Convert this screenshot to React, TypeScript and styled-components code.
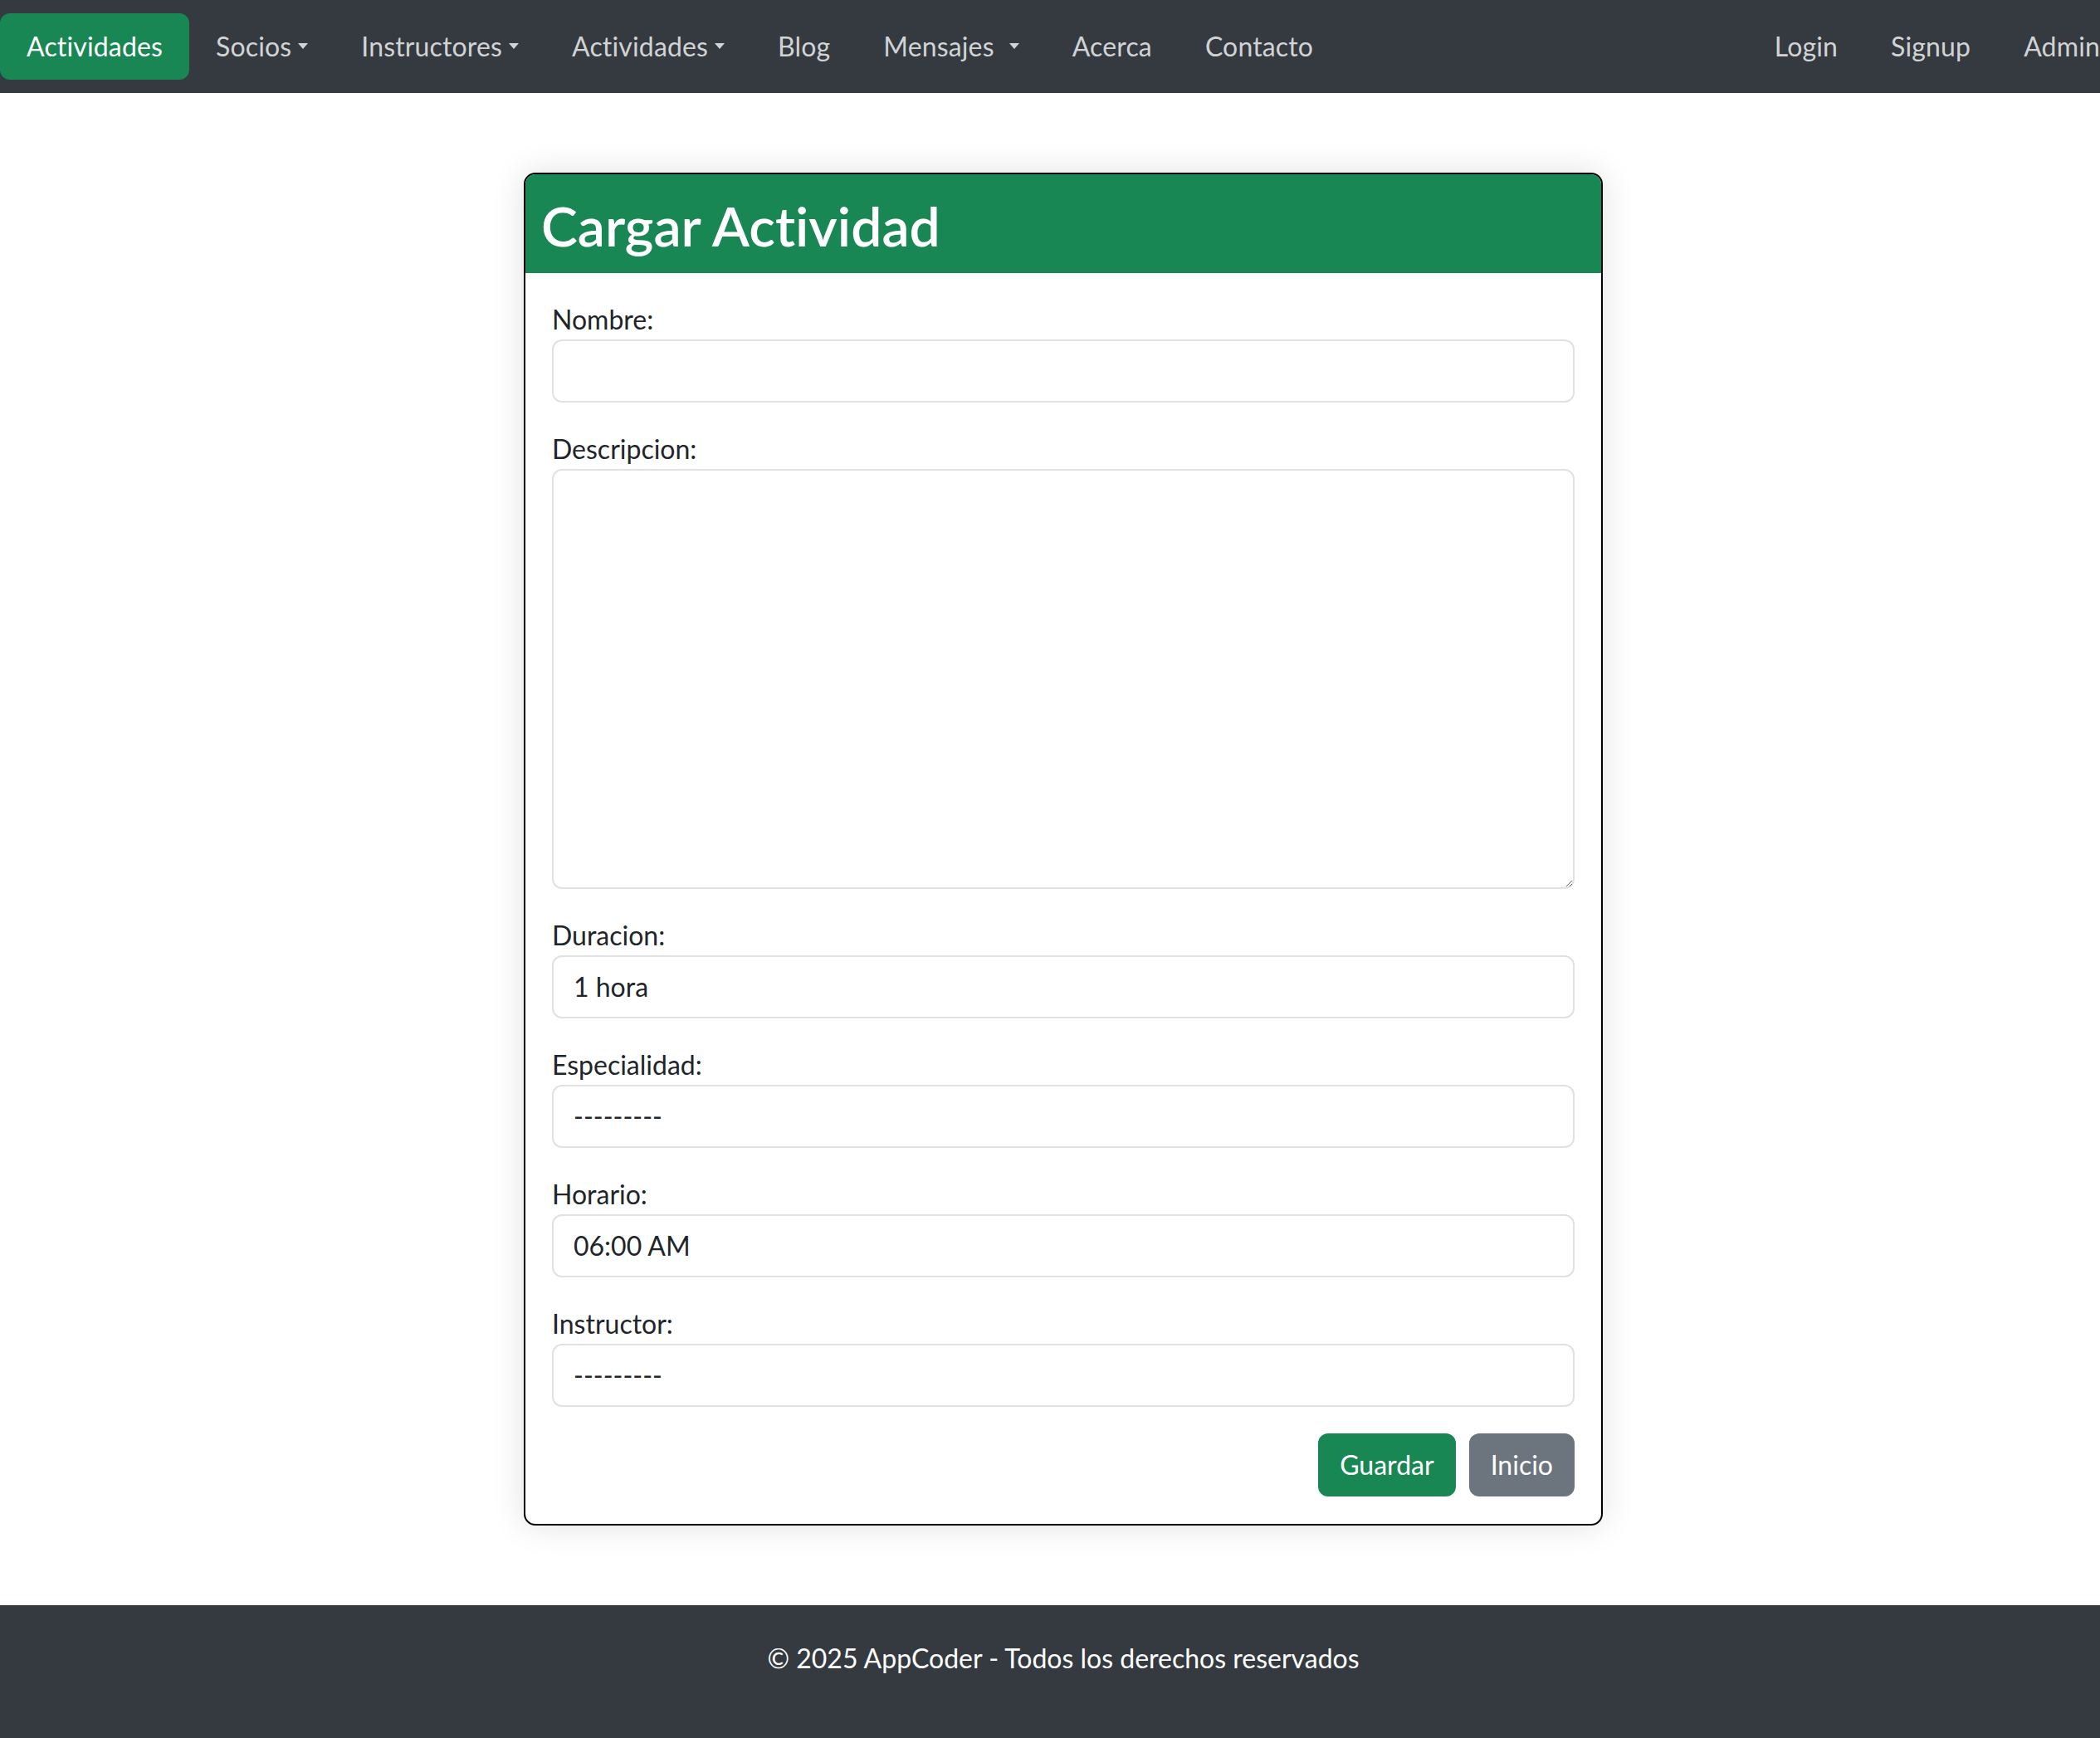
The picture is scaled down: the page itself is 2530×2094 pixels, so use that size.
import React from "react";
import styled, { createGlobalStyle } from "styled-components";

const FONT = `"Lato", "Noto Sans", "Liberation Sans", sans-serif`;

const Global = createGlobalStyle`
  html, body { margin: 0; padding: 0; overflow: hidden; background: #ffffff; }
  body {
    font-family: ${FONT};
    color: #212529;
    font-variant-ligatures: none;
    font-feature-settings: "liga" 0;
  }
  * { box-sizing: border-box; }
`;

const Page = styled.div`
  width: 2562px;
  min-height: 2094px;
  display: flex;
  flex-direction: column;
`;

const Navbar = styled.nav`
  height: 112px;
  background: #343a40;
  display: flex;
  align-items: center;
  justify-content: space-between;
  padding: 16px 0;
`;

const NavList = styled.ul`
  display: flex;
  align-items: center;
  list-style: none;
  margin: 0;
  padding: 0;
`;

const NavLink = styled.a<{ $active?: boolean }>`
  display: flex;
  align-items: center;
  padding: 16px 32px;
  font-size: 32px;
  line-height: 48px;
  letter-spacing: 0.15px;
  text-decoration: none;
  border-radius: 12px;
  color: ${(p) => (p.$active ? "#ffffff" : "rgba(255,255,255,0.78)")};
  background: ${(p) => (p.$active ? "#198754" : "transparent")};
`;

const Caret = styled.span<{ $gap?: number }>`
  display: inline-block;
  width: 0;
  height: 0;
  margin-left: ${(p) => p.$gap ?? 8}px;
  border-left: 6px solid transparent;
  border-right: 6px solid transparent;
  border-top: 7px solid currentColor;
  transform: translateY(-1px);
`;

const Main = styled.main`
  flex: 1;
  display: flex;
  justify-content: center;
  padding: 96px 0;
`;

const Card = styled.section`
  width: 1300px;
  border: 2px solid #000000;
  border-radius: 14px;
  overflow: hidden;
  background: #ffffff;
  box-shadow: 0 0 40px rgba(0, 0, 0, 0.12);
`;

const CardHeader = styled.header`
  background: #198754;
  height: 119px;
  display: flex;
  align-items: center;
  padding: 0 19px;
`;

const Title = styled.h2`
  margin: 0;
  color: #ffffff;
  font-size: 66px;
  font-weight: 600;
  line-height: 1.2;
  transform: translateY(2px);
`;

const CardBody = styled.form`
  padding: 32px;
  display: flex;
  flex-direction: column;
  gap: 32px;
`;

const Field = styled.div`
  display: flex;
  flex-direction: column;
`;

const Label = styled.label`
  font-size: 32px;
  line-height: 48px;
  color: #212529;
`;

const controlStyles = `
  width: 100%;
  font-family: ${FONT};
  font-size: 32px;
  line-height: 48px;
  color: #212529;
  background: #ffffff;
  border: 2px solid #dee2e6;
  border-radius: 12px;
  padding: 12px 24px;
  outline: none;
  appearance: none;
  -webkit-appearance: none;
  margin: 0;
`;

const Input = styled.input`
  ${controlStyles}
  height: 76px;
`;

const Select = styled.select`
  ${controlStyles}
  height: 76px;
`;

const TextArea = styled.textarea`
  ${controlStyles}
  height: 506px;
  resize: vertical;
  display: block;
`;

const Actions = styled.div`
  display: flex;
  justify-content: flex-end;
  gap: 16px;
`;

const Button = styled.button<{ $variant: "success" | "secondary" }>`
  font-family: ${FONT};
  font-size: 32px;
  line-height: 48px;
  height: 76px;
  padding: 12px 24px;
  border: 2px solid ${(p) => (p.$variant === "success" ? "#198754" : "#6c757d")};
  background: ${(p) => (p.$variant === "success" ? "#198754" : "#6c757d")};
  color: #ffffff;
  border-radius: 12px;
  cursor: pointer;
`;

const Footer = styled.footer`
  background: #343a40;
  color: #ffffff;
  text-align: center;
  padding: 40px 0;
`;

const FooterText = styled.p`
  margin: 0 0 32px;
  font-size: 32px;
  line-height: 48px;
`;

export default function App() {
  return (
    <>
      <Global />
      <Page>
        <Navbar>
          <NavList>
            <li><NavLink $active href="#">Actividades</NavLink></li>
            <li><NavLink href="#">Socios<Caret /></NavLink></li>
            <li><NavLink href="#">Instructores<Caret /></NavLink></li>
            <li><NavLink href="#">Actividades<Caret /></NavLink></li>
            <li><NavLink href="#">Blog</NavLink></li>
            <li><NavLink href="#">Mensajes<Caret $gap={18} /></NavLink></li>
            <li><NavLink href="#">Acerca</NavLink></li>
            <li><NavLink href="#">Contacto</NavLink></li>
          </NavList>
          <NavList>
            <li><NavLink href="#">Login</NavLink></li>
            <li><NavLink href="#">Signup</NavLink></li>
            <li><NavLink href="#">Admin</NavLink></li>
          </NavList>
        </Navbar>
        <Main>
          <Card>
            <CardHeader>
              <Title>Cargar Actividad</Title>
            </CardHeader>
            <CardBody onSubmit={(e) => e.preventDefault()}>
              <Field>
                <Label htmlFor="nombre">Nombre:</Label>
                <Input id="nombre" type="text" />
              </Field>
              <Field>
                <Label htmlFor="descripcion">Descripcion:</Label>
                <TextArea id="descripcion" />
              </Field>
              <Field>
                <Label htmlFor="duracion">Duracion:</Label>
                <Select id="duracion" defaultValue="1 hora">
                  <option>1 hora</option>
                </Select>
              </Field>
              <Field>
                <Label htmlFor="especialidad">Especialidad:</Label>
                <Select id="especialidad" defaultValue="">
                  <option value="">---------</option>
                </Select>
              </Field>
              <Field>
                <Label htmlFor="horario">Horario:</Label>
                <Select id="horario" defaultValue="06:00 AM">
                  <option>06:00 AM</option>
                </Select>
              </Field>
              <Field>
                <Label htmlFor="instructor">Instructor:</Label>
                <Select id="instructor" defaultValue="">
                  <option value="">---------</option>
                </Select>
              </Field>
              <Actions>
                <Button $variant="success" type="submit">Guardar</Button>
                <Button $variant="secondary" type="button">Inicio</Button>
              </Actions>
            </CardBody>
          </Card>
        </Main>
        <Footer>
          <FooterText>© 2025 AppCoder - Todos los derechos reservados</FooterText>
        </Footer>
      </Page>
    </>
  );
}
